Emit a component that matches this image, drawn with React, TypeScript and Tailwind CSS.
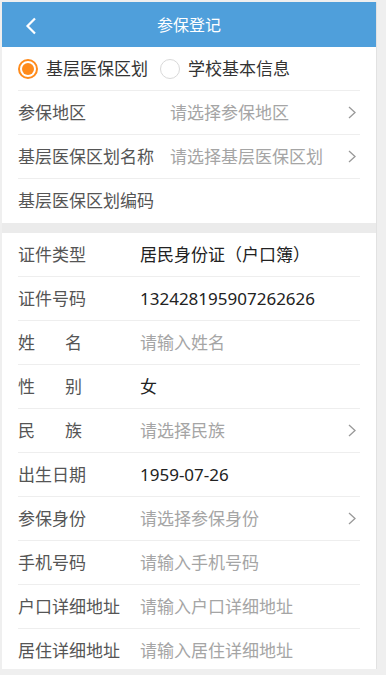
import React from "react";

const font = { fontFamily: '"Noto Sans", "Noto Sans CJK SC", sans-serif' };

function Arrow() {
  return (
    <svg width="8" height="13" viewBox="0 0 8 13" className="shrink-0">
      <polyline points="1,1 7,6.5 1,12" fill="none" stroke="#999" strokeWidth="1.3" />
    </svg>
  );
}

type Row = { label: string; value?: string; placeholder?: string; arrow?: boolean; spread?: boolean };

const regionRows: Row[] = [
  { label: "参保地区", placeholder: "请选择参保地区", arrow: true },
  { label: "基层医保区划名称", placeholder: "请选择基层医保区划", arrow: true },
  { label: "基层医保区划编码" },
];

const personRows: Row[] = [
  { label: "证件类型", value: "居民身份证（户口簿）" },
  { label: "证件号码", value: "132428195907262626" },
  { label: "姓名", placeholder: "请输入姓名", spread: true },
  { label: "性别", value: "女", spread: true },
  { label: "民族", placeholder: "请选择民族", arrow: true, spread: true },
  { label: "出生日期", value: "1959-07-26" },
  { label: "参保身份", placeholder: "请选择参保身份", arrow: true },
  { label: "手机号码", placeholder: "请输入手机号码" },
  { label: "户口详细地址", placeholder: "请输入户口详细地址" },
  { label: "居住详细地址", placeholder: "请输入居住详细地址" },
];

function FormRow({ row, labelWidth, last }: { row: Row; labelWidth: string; last?: boolean }) {
  return (
    <div className={`h-11 flex items-center ${last ? "" : "border-b border-[#eeeeee]"}`}>
      <div className={`${labelWidth} shrink-0 text-[#555]`}>
        {row.spread ? (
          <span className="w-[64px] flex justify-between">
            {row.label.split("").map((c) => (
              <span key={c}>{c}</span>
            ))}
          </span>
        ) : (
          row.label
        )}
      </div>
      <div className={`flex-1 truncate ${row.value ? "text-[#222]" : "text-[#a5a5a5]"}`}>
        {row.value ?? row.placeholder ?? ""}
      </div>
      {row.arrow && <div className="pr-[4px]"><Arrow /></div>}
    </div>
  );
}

export default function App() {
  return (
    <div className="h-[675px] bg-[#efefef] pl-[2px] pt-[2px] overflow-hidden" style={font}>
      <div className="w-[375px] h-[667px] bg-white overflow-hidden border-r border-[#e2e2e2]">
        {/* header */}
        <header className="h-[45px] bg-[#4f9fdb] relative flex items-center justify-center text-white text-[16px]">
          <svg width="12" height="18" viewBox="0 0 12 18" className="absolute left-[23px] top-[15px]">
            <polyline points="10,1.5 2.5,9 10,16.5" fill="none" stroke="#fff" strokeWidth="2.2" />
          </svg>
          参保登记
        </header>

        <div className="px-4 text-[17px]">
          {/* radio */}
          <div className="h-11 flex items-center border-b border-[#eeeeee]">
            <div className="flex items-center">
              <span className="w-5 h-5 rounded-full border-2 border-[#ff8b1b] flex items-center justify-center">
                <span className="w-3 h-3 rounded-full bg-[#ff8b1b]" />
              </span>
              <span className="ml-[8px] text-[#333]">基层医保区划</span>
            </div>
            <div className="flex items-center ml-[12px]">
              <span className="w-5 h-5 rounded-full border border-[#d9d9d9]" />
              <span className="ml-[8px] text-[#333]">学校基本信息</span>
            </div>
          </div>
          {regionRows.map((r, i) => (
            <FormRow key={r.label} row={r} labelWidth="w-[152px]" last={i === regionRows.length - 1} />
          ))}
        </div>

        <div className="h-[10px] bg-[#ebebeb]" />

        <div className="px-4 text-[17px]">
          {personRows.map((r) => (
            <FormRow key={r.label} row={r} labelWidth="w-[122px]" />
          ))}
        </div>
      </div>
    </div>
  );
}
